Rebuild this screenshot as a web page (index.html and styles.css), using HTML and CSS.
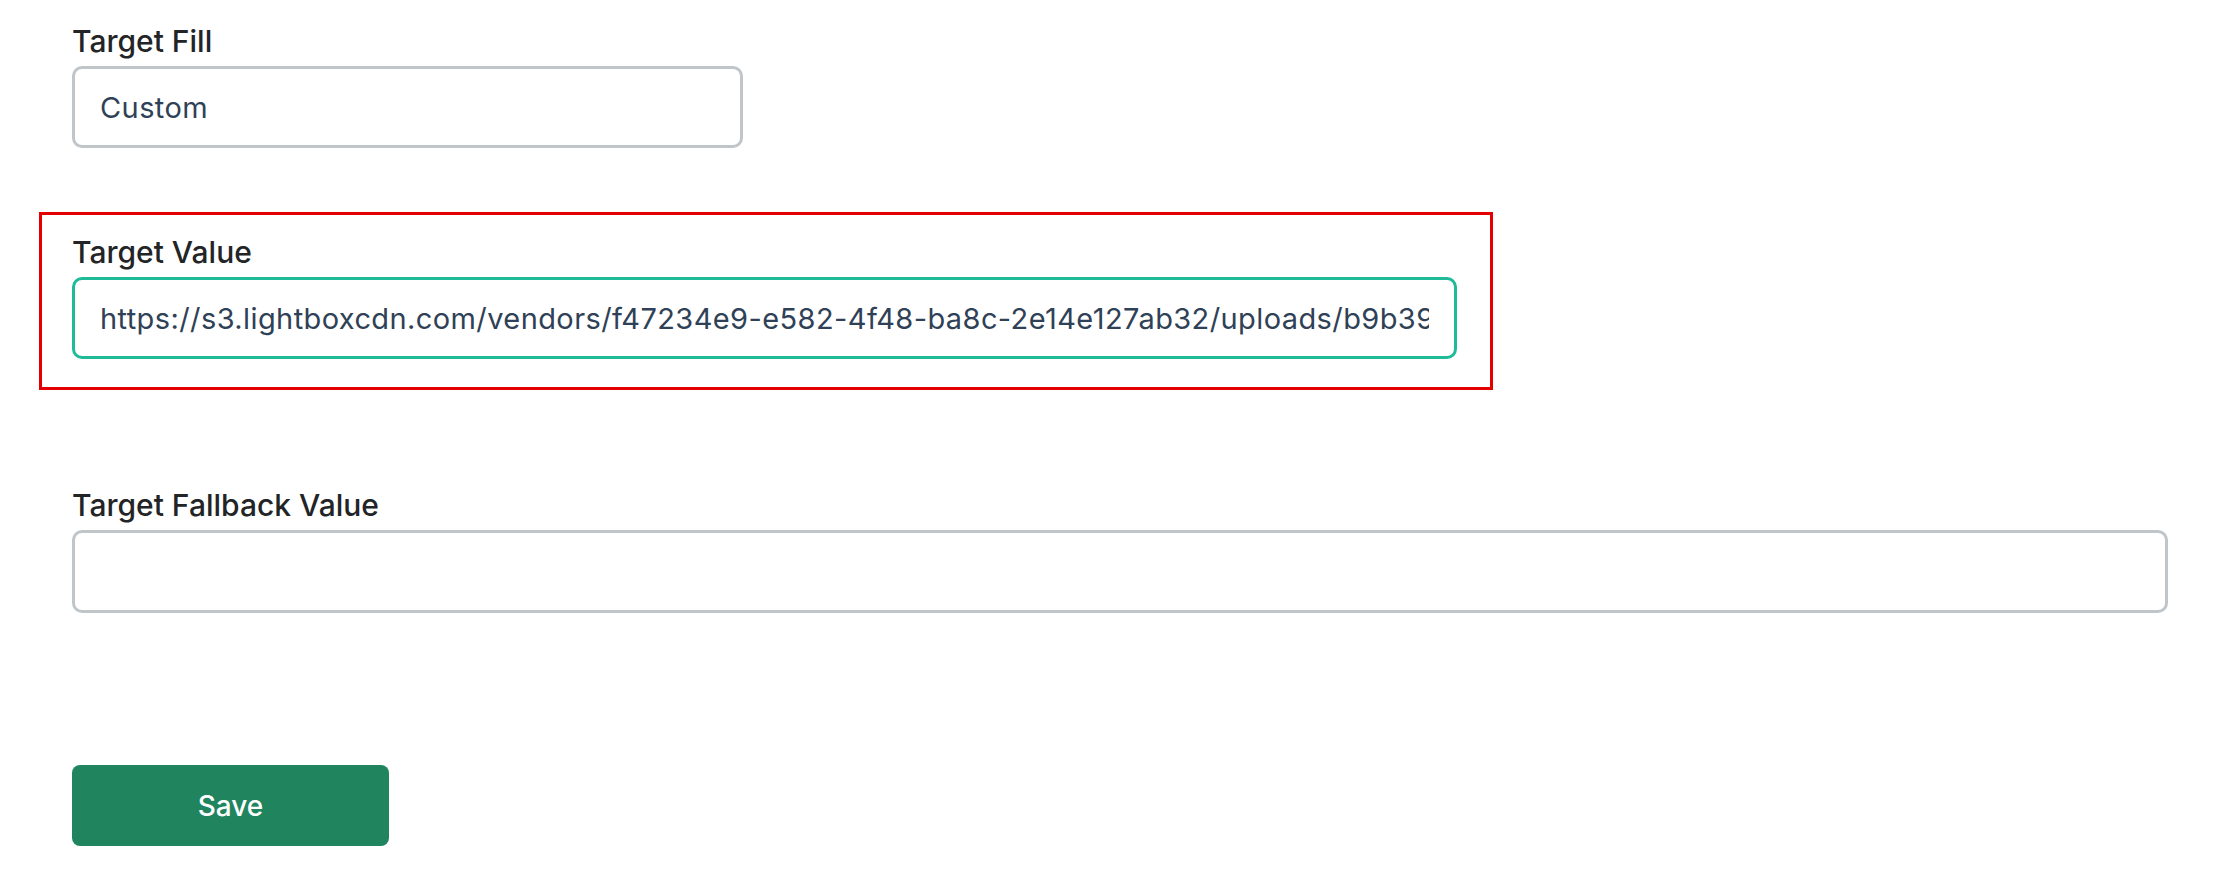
FILE: index.html
```html
<!DOCTYPE html>
<html lang="en">
<head>
<meta charset="utf-8">
<title>Target settings</title>
<link rel="stylesheet" href="styles.css">
</head>
<body>
<form class="form">
  <div class="field field-fill">
    <label class="label">Target Fill</label>
    <div class="input input-short"><span class="value">Custom</span></div>
  </div>

  <div class="highlight">
    <div class="field">
      <label class="label">Target Value</label>
      <div class="input input-focus input-mid"><span class="value">https://s3.lightboxcdn.com/vendors/f47234e9-e582-4f48-ba8c-2e14e127ab32/uploads/b9b3995c1a7e.png</span></div>
    </div>
  </div>

  <div class="field field-fallback">
    <label class="label">Target Fallback Value</label>
    <div class="input input-full"><span class="value"></span></div>
  </div>

  <button type="button" class="btn-save">Save</button>
</form>
</body>
</html>
```

FILE: styles.css
```css
* {
  box-sizing: border-box;
}

html, body {
  margin: 0;
  padding: 0;
  background: #ffffff;
}

body {
  font-family: Inter, "Noto Sans", "Liberation Sans", sans-serif;
}

.form {
  display: flex;
  flex-direction: column;
  align-items: flex-start;
  padding: 23px 0 0 72px;
}

.field {
  display: flex;
  flex-direction: column;
  align-items: flex-start;
}

.label {
  font-size: 30px;
  line-height: 36px;
  font-weight: 500;
  color: #222426;
  margin-bottom: 7px;
}

.input {
  height: 82px;
  border: 3px solid #bfc5c9;
  border-radius: 10px;
  background: #fff;
  display: flex;
  align-items: center;
  padding: 0 25px 0 25px;
}

.value {
  display: block;
  overflow: hidden;
  white-space: nowrap;
  font-size: 29px;
  letter-spacing: 0.4px;
  color: #2f4156;
  flex: 1;
}

.input-short {
  width: 671px;
}

.input-mid {
  width: 1385px;
}

.input-full {
  width: 2096px;
  height: 83px;
}

.input-focus {
  border-color: #1fbb98;
}

.highlight {
  margin: 64px 0 0 -33px;
  width: 1454px;
  border: 3px solid #e40000;
  padding: 19px 0 28px 30px;
}

.field-fallback {
  margin-top: 97px;
}

.btn-save {
  margin-top: 152px;
  width: 317px;
  height: 81px;
  border: none;
  border-radius: 8px;
  background: #20855f;
  color: #ffffff;
  font-family: Inter, "Noto Sans", "Liberation Sans", sans-serif;
  font-size: 28px;
  font-weight: 500;
  cursor: pointer;
}
```
